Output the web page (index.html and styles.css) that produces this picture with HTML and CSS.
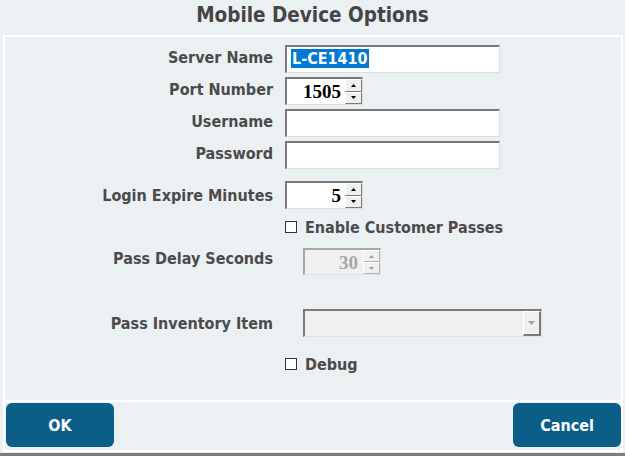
FILE: index.html
```html
<!DOCTYPE html>
<html>
<head>
<meta charset="utf-8">
<link rel="stylesheet" href="styles.css">
</head>
<body>
<div class="window">
  <h1 class="title">Mobile Device Options</h1>
  <div class="frame">
    <div class="content">
      <div class="row row-first">
        <span class="lbl lbl-up">Server Name</span>
        <div class="textbox"><span class="selected">L-CE1410</span></div>
      </div>
      <div class="row row-tight">
        <span class="lbl lbl-up">Port Number</span>
        <div class="spin">
          <span class="val">1505</span>
          <div class="spinbtns">
            <span class="sb"><svg width="5" height="3" viewBox="0 0 5 3"><path d="M0 3h5L2.5 0z" fill="#000"/></svg></span>
            <span class="sb"><svg width="5" height="3" viewBox="0 0 5 3"><path d="M0 0h5L2.5 3z" fill="#000"/></svg></span>
          </div>
        </div>
      </div>
      <div class="row row-tight">
        <span class="lbl lbl-up">Username</span>
        <div class="textbox"></div>
      </div>
      <div class="row row-tight">
        <span class="lbl lbl-up">Password</span>
        <div class="textbox"></div>
      </div>
      <div class="row row-login">
        <span class="lbl">Login Expire Minutes</span>
        <div class="spin">
          <span class="val">5</span>
          <div class="spinbtns">
            <span class="sb"><svg width="5" height="3" viewBox="0 0 5 3"><path d="M0 3h5L2.5 0z" fill="#000"/></svg></span>
            <span class="sb"><svg width="5" height="3" viewBox="0 0 5 3"><path d="M0 0h5L2.5 3z" fill="#000"/></svg></span>
          </div>
        </div>
      </div>
      <div class="check-row check-enable">
        <span class="checkbox"></span>
        <span class="check-label">Enable Customer Passes</span>
      </div>
      <div class="row row-delay">
        <span class="lbl lbl-up3">Pass Delay Seconds</span>
        <div class="spin spin-disabled">
          <span class="val">30</span>
          <div class="spinbtns">
            <span class="sb"><svg width="5" height="3" viewBox="0 0 5 3"><path d="M0 3h5L2.5 0z" fill="#a0a0a0"/></svg></span>
            <span class="sb"><svg width="5" height="3" viewBox="0 0 5 3"><path d="M0 0h5L2.5 3z" fill="#a0a0a0"/></svg></span>
          </div>
        </div>
      </div>
      <div class="row row-inventory">
        <span class="lbl">Pass Inventory Item</span>
        <div class="select">
          <span class="select-val"></span>
          <span class="dropbtn"><svg width="7" height="4" viewBox="0 0 7 4"><path d="M0 0h7L3.5 4z" fill="#a0a0a0"/></svg></span>
        </div>
      </div>
      <div class="check-row check-debug">
        <span class="checkbox"></span>
        <span class="check-label">Debug</span>
      </div>
    </div>
    <div class="actions">
      <button class="btn">OK</button>
      <button class="btn">Cancel</button>
    </div>
  </div>
  <div class="bottombar"></div>
</div>
</body>
</html>
```

FILE: styles.css
```css
html, body {
  margin: 0;
  padding: 0;
  background: #ebf0f3;
}
body {
  width: 625px;
  height: 456px;
  overflow: hidden;
  font-family: "DejaVu Sans Condensed", "DejaVu Sans", sans-serif;
  font-stretch: condensed;
  font-weight: bold;
}
.window {
  display: flex;
  flex-direction: column;
  height: 456px;
}
.title {
  margin: 0;
  height: 35px;
  line-height: 31px;
  font-size: 20.5px;
  font-weight: bold;
  color: #454545;
  text-align: center;
}
.frame {
  margin: 0 2px 0 3px;
  border: 2px solid #ffffff;
  display: flex;
  flex-direction: column;
  height: 417px;
  box-sizing: border-box;
}
.content {
  height: 363px;
  box-sizing: border-box;
  padding-top: 8px;
  display: flex;
  flex-direction: column;
}
.row {
  display: flex;
  align-items: center;
  height: 28px;
}
.row-tight { margin-top: 4px; }
.row-login { margin-top: 12px; }
.row-delay { margin-top: 11px; height: 27px; }
.row-inventory { margin-top: 34px; }
.lbl {
  width: 268px;
  margin-right: 12px;
  text-align: right;
  font-size: 16px;
  color: #4b4b4b;
  white-space: nowrap;
}
.lbl-up { margin-bottom: 4px; }
.lbl-up3 { margin-bottom: 6px; }

.textbox {
  width: 215px;
  height: 28px;
  box-sizing: border-box;
  border-style: solid;
  border-width: 2px 1px 1px 2px;
  border-color: #7a7a7a #dedede #dedede #7a7a7a;
  background: #ffffff;
  padding: 2px 0 0 4px;
}
.selected {
  display: inline-block;
  background: #0078d7;
  color: #ffffff;
  font-size: 16px;
  line-height: 19px;
  height: 19px;
  padding: 0 1px;
}

.spin {
  width: 78px;
  height: 28px;
  box-sizing: border-box;
  border-style: solid;
  border-width: 2px 1px 1px 2px;
  border-color: #7a7a7a #dedede #dedede #7a7a7a;
  background: #ffffff;
  display: flex;
}
.val {
  flex: 1;
  text-align: right;
  padding-right: 4px;
  font-family: "Liberation Serif", serif;
  font-stretch: normal;
  font-size: 19px;
  font-weight: bold;
  line-height: 25px;
  color: #000000;
}
.spinbtns {
  width: 17px;
  display: flex;
  flex-direction: column;
}
.sb {
  flex: 1;
  box-sizing: border-box;
  border-style: solid;
  border-width: 1px;
  border-color: #ffffff #7a7a7a #7a7a7a #ffffff;
  background: #f0f0f0;
  display: flex;
  align-items: center;
  justify-content: center;
}
.spin-disabled {
  margin-left: 18px;
  height: 27px;
  background: #f0f0f0;
  border-color: #a8a8a8 #e3e3e3 #e3e3e3 #a8a8a8;
}
.spin-disabled .val {
  color: #a6a6a6;
  padding-right: 5px;
}
.spin-disabled .sb {
  border-color: #ffffff #b4b4b4 #b4b4b4 #ffffff;
}

.select {
  margin-left: 18px;
  width: 239px;
  height: 28px;
  box-sizing: border-box;
  border-style: solid;
  border-width: 2px 1px 1px 2px;
  border-color: #7a7a7a #e3e3e3 #e3e3e3 #7a7a7a;
  background: #efefef;
  display: flex;
}
.select-val { flex: 1; }
.dropbtn {
  width: 18px;
  box-sizing: border-box;
  border-style: solid;
  border-width: 1px 2px 2px 1px;
  border-color: #ffffff #7a7a7a #7a7a7a #ffffff;
  background: #efefef;
  display: flex;
  align-items: center;
  justify-content: center;
}

.check-row {
  display: flex;
  align-items: center;
  height: 20px;
  padding-left: 280px;
}
.check-enable { margin-top: 8px; }
.check-debug { margin-top: 17px; }
.checkbox {
  width: 12px;
  height: 12px;
  box-sizing: border-box;
  border: 1.5px solid #333333;
  background: #ffffff;
  margin-right: 8px;
}
.check-label {
  font-size: 16px;
  color: #4b4b4b;
}

.actions {
  border-top: 2px solid #ffffff;
  flex: 1;
  display: flex;
  justify-content: space-between;
  align-items: flex-start;
  padding: 1px 0 0 1px;
}
.btn {
  width: 108px;
  height: 44px;
  border: none;
  border-radius: 6px;
  background: #0a5e87;
  color: #ffffff;
  font-family: "DejaVu Sans Condensed", "DejaVu Sans", sans-serif;
  font-stretch: condensed;
  font-weight: bold;
  font-size: 16px;
  padding: 0;
}
.bottombar {
  margin-top: 1px;
  height: 3px;
  background: #7d7d7d;
}
```
